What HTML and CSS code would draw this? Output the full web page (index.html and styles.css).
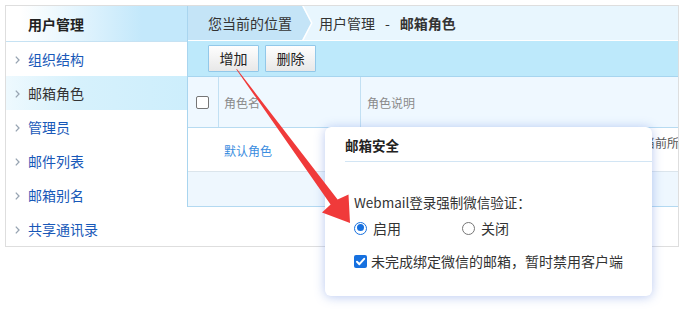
FILE: index.html
```html
<!DOCTYPE html>
<html lang="zh-CN">
<head>
<meta charset="utf-8">
<title>邮箱角色</title>
<link rel="stylesheet" href="styles.css">
</head>
<body>
<div class="frame">
  <aside class="side">
    <div class="side-head">用户管理</div>
    <ul class="menu">
      <li class="item"><svg class="chev" width="5" height="8" viewBox="0 0 5 8"><polyline points="0.8,0.6 4,4 0.8,7.4" /></svg><span>组织结构</span></li>
      <li class="item active"><svg class="chev" width="5" height="8" viewBox="0 0 5 8"><polyline points="0.8,0.6 4,4 0.8,7.4" /></svg><span>邮箱角色</span></li>
      <li class="item"><svg class="chev" width="5" height="8" viewBox="0 0 5 8"><polyline points="0.8,0.6 4,4 0.8,7.4" /></svg><span>管理员</span></li>
      <li class="item"><svg class="chev" width="5" height="8" viewBox="0 0 5 8"><polyline points="0.8,0.6 4,4 0.8,7.4" /></svg><span>邮件列表</span></li>
      <li class="item"><svg class="chev" width="5" height="8" viewBox="0 0 5 8"><polyline points="0.8,0.6 4,4 0.8,7.4" /></svg><span>邮箱别名</span></li>
      <li class="item"><svg class="chev" width="5" height="8" viewBox="0 0 5 8"><polyline points="0.8,0.6 4,4 0.8,7.4" /></svg><span>共享通讯录</span></li>
    </ul>
  </aside>
  <main class="main">
    <div class="crumb">
      <div class="crumb-here">您当前的位置</div>
      <svg class="crumb-arrow" width="12" height="34" viewBox="0 0 12 34"><polygon points="0,0 9,17 0,34" fill="#c4e4f7"/><polyline points="0.5,-1 9.8,17 0.5,35" fill="none" stroke="#ffffff" stroke-width="1.4"/></svg>
      <div class="crumb-path">用户管理<span class="sep">-</span><b>邮箱角色</b></div>
    </div>
    <div class="toolbar">
      <button class="btn">增加</button>
      <button class="btn">删除</button>
    </div>
    <div class="grid">
      <div class="row head">
        <div class="c-check"><span class="cb"></span></div>
        <div class="c-name">角色名</div>
        <div class="c-desc">角色说明</div>
      </div>
      <div class="row r1">
        <div class="c-check"></div>
        <div class="c-name link">默认角色</div>
        <div class="c-desc desc">系统默认角色，新建邮箱账号时将自动归入此角色，当前所有用户均适用</div>
      </div>
      <div class="row r2"></div>
    </div>
  </main>
</div>

<div class="modal">
  <div class="modal-title">邮箱安全</div>
  <div class="modal-body">
    <div class="label">Webmail登录强制微信验证：</div>
    <div class="radios">
      <span class="opt opt-on"><span class="radio on"></span>启用</span>
      <span class="opt"><span class="radio"></span>关闭</span>
    </div>
    <div class="check-line"><span class="chk"><svg width="13" height="13" viewBox="0 0 13 13"><polyline points="3,6.8 5.4,9.2 10.2,3.8" fill="none" stroke="#fff" stroke-width="2" stroke-linecap="round" stroke-linejoin="round"/></svg></span>未完成绑定微信的邮箱，暂时禁用客户端</div>
  </div>
</div>

<svg class="arrow" width="685" height="316" viewBox="0 0 685 316">
  <polygon points="236,69 237.3,69.6 337.6,199.4 348.5,194.5 350,223 322,212.5 330.6,204.5" fill="#f03a3a"/>
</svg>
</body>
</html>
```
FILE: styles.css
```css
* { box-sizing: border-box; }

html, body {
  margin: 0;
  padding: 0;
  background: #ffffff;
}

body {
  width: 685px;
  height: 316px;
  overflow: hidden;
  position: relative;
  font-family: "Noto Sans CJK SC", "Noto Sans", sans-serif;
  font-size: 14px;
  color: #333;
}

.frame {
  margin: 5px 0 0 5px;
  width: 674px;
  height: 242px;
  border: 1px solid #dedede;
  display: flex;
  align-items: flex-start;
}

/* sidebar */
.side {
  width: 181px;
  flex: none;
}

.side-head {
  height: 36px;
  border-bottom: 1px solid #c6e2f3;
  padding-left: 22px;
  display: flex;
  align-items: center;
  font-weight: bold;
  color: #222;
  background: linear-gradient(to right, #ffffff 8%, #c3e8fb 75%);
}

.menu {
  list-style: none;
  margin: 0;
  padding: 0;
}

.item {
  height: 34px;
  display: flex;
  align-items: center;
  padding-left: 9px;
  color: #1858b8;
}

.item.active {
  color: #333;
  background: linear-gradient(to right, #eef9fe 0%, #d6f1fc 40%, #cdeefc 100%);
}

.chev {
  flex: none;
  margin-right: 8px;
  margin-top: 1px;
}

.chev polyline {
  fill: none;
  stroke: #97a4b2;
  stroke-width: 1.3;
}

/* main */
.main {
  width: 491px;
  flex: none;
  border-left: 1px solid #a9d5ef;
  overflow: hidden;
}

.crumb {
  height: 35px;
  border-bottom: 1px solid #ffffff;
  background: #e8f6fe;
  display: flex;
  align-items: stretch;
}

.crumb-here {
  width: 114px;
  padding-left: 20px;
  background: #c4e4f7;
  display: flex;
  align-items: center;
  color: #333;
}

.crumb-arrow {
  flex: none;
}

.crumb-path {
  display: flex;
  align-items: center;
  padding-left: 5px;
  color: #333;
}

.crumb-path .sep {
  margin: 0 10px;
}

.crumb-path b {
  color: #333;
}

.toolbar {
  height: 36px;
  background: #bde9fb;
  border-bottom: 1px solid #a7d5ef;
  padding: 4px 0 0 20px;
  display: flex;
  align-items: flex-start;
  gap: 6px;
}

.btn {
  width: 51px;
  height: 27px;
  margin: 0;
  padding: 0;
  border: 1px solid #92c8e9;
  border-radius: 1px;
  background: linear-gradient(#fefefe, #e8e8e8);
  font-family: "Noto Sans CJK SC", "Noto Sans", sans-serif;
  font-size: 14px;
  color: #222;
  line-height: 25px;
}

.grid {
  width: 490px;
}

.row {
  display: flex;
  align-items: stretch;
}

.row.head {
  height: 51px;
  background: #eff8ff;
  border-bottom: 1px solid #b7dbf1;
  font-size: 12px;
  color: #8a8a8a;
}

.row.r1 {
  height: 44px;
  background: #ffffff;
  border-bottom: 1px solid #dbe5ec;
  font-size: 12px;
}

.row.r2 {
  height: 35px;
  background: #eef7fe;
  border-bottom: 1px solid #b3d9f1;
}

.c-check {
  width: 31px;
  flex: none;
  display: flex;
  align-items: center;
  justify-content: center;
}

.c-name {
  width: 142px;
  flex: none;
  padding-left: 5px;
  display: flex;
  align-items: center;
}

.c-desc {
  flex: 1;
  padding-left: 6px;
  display: flex;
  align-items: center;
  white-space: nowrap;
  overflow: hidden;
}

.head .c-check { border-right: 1px solid #c2e0f3; padding-right: 1px; }
.head .c-name { border-right: 1px solid #c2e0f3; }

.cb {
  width: 13px;
  height: 13px;
  border: 1px solid #767676;
  border-radius: 2px;
  background: #fff;
  margin-top: 1px;
}

.link {
  color: #3a8de0;
  padding-top: 2px;
}

.desc {
  color: #555;
  line-height: 16px;
  display: block;
  padding-top: 7px;
}

/* modal */
.modal {
  position: absolute;
  left: 325px;
  top: 127px;
  width: 327px;
  height: 169px;
  background: #ffffff;
  border-radius: 6px;
  box-shadow: 0 1px 11px rgba(80, 120, 220, 0.4);
  z-index: 2;
}

.modal-title {
  margin-left: 20px;
  padding-top: 8px;
  height: 35px;
  line-height: 20px;
  border-bottom: 1px solid #d2e5f4;
  font-size: 13.5px;
  font-weight: bold;
  color: #222;
}

.modal-body {
  padding: 30px 0 0 29px;
  font-size: 13.5px;
  color: #333;
}

.label {
  line-height: 20px;
  height: 20px;
}

.radios {
  margin-top: 6px;
  height: 20px;
  display: flex;
  align-items: center;
  font-size: 14px;
}

.opt {
  display: flex;
  align-items: center;
  line-height: 20px;
}

.opt-on {
  width: 108px;
}

.radio {
  width: 13px;
  height: 13px;
  border-radius: 50%;
  border: 1px solid #767676;
  margin-right: 6px;
  background: #fff;
  position: relative;
}

.radio.on {
  border: 1.5px solid #1670df;
}

.radio.on::after {
  content: "";
  position: absolute;
  left: 1.5px;
  top: 1.5px;
  width: 7px;
  height: 7px;
  border-radius: 50%;
  background: #1670df;
}

.check-line {
  margin-top: 13px;
  height: 20px;
  line-height: 20px;
  display: flex;
  align-items: center;
  font-size: 14px;
}

.chk {
  width: 13px;
  height: 13px;
  border-radius: 2px;
  background: #1670df;
  margin-right: 4px;
  display: flex;
}

.arrow {
  position: absolute;
  left: 0;
  top: 0;
  z-index: 3;
  pointer-events: none;
}
```
